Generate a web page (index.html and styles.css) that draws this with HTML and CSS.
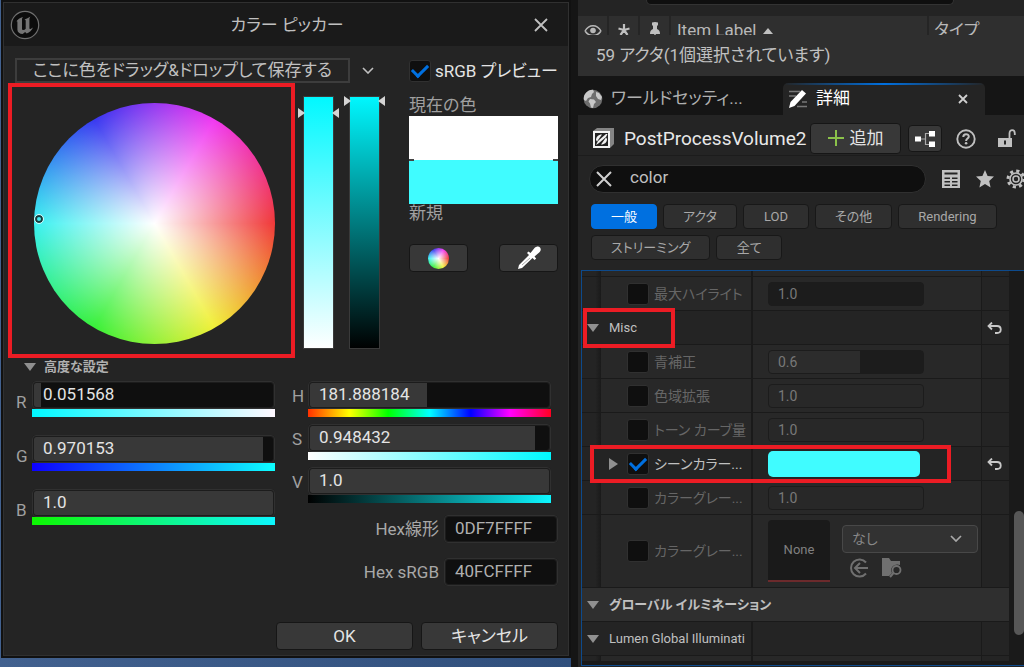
FILE: index.html
```html
<!DOCTYPE html>
<html lang="ja">
<head>
<meta charset="utf-8">
<title>カラー ピッカー</title>
<link rel="stylesheet" href="styles.css">
</head>
<body>
<main class="desktop">
  <section class="backdrop">
    <form class="dialog" aria-label="カラー ピッカー">
      <header class="titlebar">
        <svg class="logo" viewBox="0 0 30 30" width="30" height="30" aria-hidden="true">
          <circle cx="15" cy="15" r="13.7" fill="#0c0c0c" stroke="#6f6f6f" stroke-width="1.2"/>
          <path d="M6 12c1.600-2.500 4-4.400 7-5-.8.900-1 1.600-1 2.700v8.800c0 1 .5 1.600 1.300 1.600.9 0 1.700-.5 2.400-1.300v-8c0-.8-.4-1.200-1.200-1.300 2-.7 4-1.700 6-3-.8 1-1.100 1.800-1.100 3v8.500c0 .9.600 1 1.200.9.700-.1 1.500-.6 2.400-1.300-1.300 3-3.500 5-6.300 6l-1.600-1.500-2.400 1.900c-3-.2-5.300-1.700-5.300-4.300v-7c0-1.600-.6-1.900-1.400-.7z" fill="#747474"/>
        </svg>
        <h1 class="title">カラー ピッカー</h1>
        <button class="close" type="button" aria-label="閉じる">
          <svg viewBox="0 0 14 14" width="14" height="14"><path d="M1 1l12 12M13 1L1 13" stroke="#c0c0c0" stroke-width="1.800"/></svg>
        </button>
      </header>

      <div class="content">
        <div class="toprow">
          <div class="dropzone">ここに色をドラッグ&amp;ドロップして保存する</div>
          <button class="plain" type="button" aria-label="保存した色">
            <svg viewBox="0 0 12 7" width="12" height="7"><path d="M1 1l5 5 5-5" fill="none" stroke="#c0c0c0" stroke-width="1.600"/></svg>
          </button>
          <label class="srgb"><input class="check" type="checkbox" checked>sRGB プレビュー</label>
        </div>

        <div class="picker">
          <div class="wheelframe"><div class="wheel"><span class="cursor"></span></div></div>
          <div class="bar bar-sat"><i class="mark mark-l"></i><i class="mark mark-r"></i></div>
          <div class="bar bar-val"><i class="mark mark-l"></i><i class="mark mark-r"></i></div>
          <div class="preview">
            <span class="caption">現在の色</span>
            <div class="swatch"></div>
            <span class="caption">新規</span>
            <div class="modes">
              <button class="btn mode" type="button" aria-label="カラーホイール"><span class="miniwheel"></span></button>
              <button class="btn mode" type="button" aria-label="スポイト">
                <svg viewBox="0 0 26 26" width="26" height="26"><path d="M2 24l1-4L13 10l-2-2 1.500-1.500 2 1.500 4-5c2-2 4.500-2 5.500-.5 1.200 1.500 1 3.500-.8 5l-4.700 4 1.700 2-1.700 1.600-2-2L6 23z" fill="#fff"/><path d="M6 20l8-7" stroke="#aaa" stroke-width="1"/></svg>
              </button>
            </div>
          </div>
        </div>

        <button class="advanced" type="button"><i class="tri"></i>高度な設定</button>

        <div class="channels">
          <div class="group rgb">
            <div class="channel"><label for="r">R</label><div class="field"><input id="r" class="num" value="0.051568" style="--fill:3%"><div class="ramp ramp-r"></div></div></div>
            <div class="channel"><label for="g">G</label><div class="field"><input id="g" class="num" value="0.970153" style="--fill:96%"><div class="ramp ramp-g"></div></div></div>
            <div class="channel"><label for="b">B</label><div class="field"><input id="b" class="num" value="1.0" style="--fill:100%"><div class="ramp ramp-b"></div></div></div>
          </div>
          <div class="right">
            <div class="group hsv">
              <div class="channel"><label for="h">H</label><div class="field"><input id="h" class="num" value="181.888184" style="--fill:49%"><div class="ramp ramp-h"></div></div></div>
              <div class="channel"><label for="s">S</label><div class="field"><input id="s" class="num" value="0.948432" style="--fill:94%"><div class="ramp ramp-s"></div></div></div>
              <div class="channel"><label for="v">V</label><div class="field"><input id="v" class="num" value="1.0" style="--fill:100%"><div class="ramp ramp-v"></div></div></div>
            </div>
            <div class="hexes">
              <div class="hexrow"><label for="hl">Hex線形</label><input id="hl" class="num hex" value="0DF7FFFF"></div>
              <div class="hexrow"><label for="hs">Hex sRGB</label><input id="hs" class="num hex" value="40FCFFFF"></div>
            </div>
          </div>
        </div>

        <footer class="actions">
          <button class="btn" type="button">OK</button>
          <button class="btn" type="button">キャンセル</button>
        </footer>
      </div>
    </form>
  </section>

  <section class="side">
    <div class="outliner">
      <div class="outsearch"><div class="pill-end"></div></div>
      <div class="cols">
        <span class="col ico"><svg viewBox="0 0 18 12" width="18" height="12"><path d="M1 7c4-7 12-7 16 0M1 7c4 6 12 6 16 0" fill="none" stroke="#b8b8b8" stroke-width="1.500"/><circle cx="9" cy="6.500" r="2.800" fill="#b8b8b8"/></svg></span>
        <span class="col ico"><svg viewBox="0 0 12 12" width="12" height="12"><path d="M6 0v6M0.500 4.500L6 6M11.500 4.500L6 6M2.500 11L6 6l3.500 5" stroke="#c0c0c0" stroke-width="2.200" fill="none"/></svg></span>
        <span class="col ico"><svg viewBox="0 0 12 16" width="12" height="16"><path d="M3 0.500q3-1 6 0v2.500l-1 1v3c2 1 3 2 3 5H1c0-3 1-4 3-5v-3l-1-1z" fill="#c0c0c0"/><path d="M6 12v4" stroke="#c0c0c0" stroke-width="1.400"/></svg></span>
        <span class="col item">Item Label <i class="sort"></i></span>
        <span class="col type">タイプ</span>
      </div>
      <div class="status">59 アクタ(1個選択されています)</div>
    </div>

    <nav class="tabs">
      <a class="tab" href="#world">
        <svg viewBox="0 0 20 20" width="20" height="20" aria-hidden="true"><circle cx="10" cy="10" r="9.300" fill="#6e6e6e"/><path d="M2 5c2-3 5-4.500 8-4.300l1 2.300-2 2-1 3-3 1-2 3-2-1c-.6-2 0-4.500 1-6zM7 10l4 .5 2 2.500-2 2-1 4-2-.5-1-4-1.500-2zM13 3l3 1 3 4-1 3-3-1-2-3z" fill="#c8c8c8"/></svg>
        <span>ワールドセッティ...</span>
      </a>
      <a class="tab active" href="#details">
        <svg viewBox="0 0 20 20" width="20" height="20" aria-hidden="true"><path d="M1 2.500h11M1 7h7M14 13h5M9 17.500h10" stroke="#777" stroke-width="1.500"/><path d="M1 19l1.500-6L14 1l4 3.500L6.500 17z" fill="#fff"/></svg>
        <span>詳細</span>
        <svg class="tabclose" viewBox="0 0 10 10" width="10" height="10" aria-hidden="true"><path d="M1 1l8 8M9 1L1 9" stroke="#d0d0d0" stroke-width="1.800"/></svg>
      </a>
    </nav>

    <div class="details">
      <div class="objrow">
        <svg viewBox="0 0 21 21" width="21" height="21" aria-hidden="true"><path d="M0 3l4-3h17v16l-4 4z" fill="#858585"/><rect x="0" y="3" width="17" height="17" fill="#f2f2f2"/><rect x="2" y="5" width="13" height="13" fill="#222"/><path d="M3 12c0-3 2-5.500 6-5.500l-5 7zM14 11c0 3-2 5.500-6 5.500l5-7z" fill="#f2f2f2"/><path d="M3 17l2-4 8-7h1.500l-1.500 3-7 6z" fill="#f2f2f2"/></svg>
        <h2 class="objname">PostProcessVolume2</h2>
        <button class="btn add" type="button"><svg viewBox="0 0 16 16" width="16" height="16"><path d="M8 0v16M0 8h16" stroke="#8bc24a" stroke-width="2"/></svg>追加</button>
        <button class="btn tree" type="button" aria-label="ブループリント"><svg viewBox="0 0 22 16" width="22" height="16"><path d="M7 8h5M16 2.500h-4.500v11H16" fill="none" stroke="#aaa" stroke-width="1.200"/><path d="M1 5.500h6v5H1zM15 0h6v5.500h-6zM15 10.500h6V16h-6z" fill="#fff"/></svg></button>
        <button class="plain" type="button" aria-label="ヘルプ"><svg viewBox="0 0 20 20" width="20" height="20"><circle cx="10" cy="10" r="8.700" fill="none" stroke="#c0c0c0" stroke-width="1.900"/><path d="M7.300 8c0-3.800 5.600-3.600 5.500-.4 0 2-2.700 2-2.700 4.400" fill="none" stroke="#c0c0c0" stroke-width="2"/><circle cx="10.100" cy="14.300" r="1.300" fill="#c0c0c0"/></svg></button>
        <button class="plain lock" type="button" aria-label="ロック"><svg viewBox="0 0 18 19" width="18" height="19"><path d="M11.500 9V4.500c0-4.500 5.300-4.500 5.300 0V6" fill="none" stroke="#c0c0c0" stroke-width="1.800"/><path d="M0 9h14v9H0z" fill="#c0c0c0"/><path d="M7 11.500v4" stroke="#242424" stroke-width="2"/></svg></button>
      </div>

      <div class="searchrow">
        <div class="search">
          <svg viewBox="0 0 16 16" width="16" height="16" aria-hidden="true"><path d="M1 1l14 14M15 1L1 15" stroke="#d0d0d0" stroke-width="2"/></svg>
          <input aria-label="詳細を検索" value="color">
        </div>
        <button class="plain" type="button" aria-label="プロパティ マトリックス"><svg viewBox="0 0 18 18" width="18" height="18"><path d="M0 0h18v18H0z" fill="#c0c0c0"/><path d="M2.500 2.500h13v2h-13zM2.500 7.500H8v1.500H2.500zM10 7.500h5.500v1.500H10zM2.500 11H8v1.500H2.500zM10 11h5.500v1.500H10zM2.500 14.500H8V16H2.500zM10 14.500h5.500V16H10z" fill="#242424"/></svg></button>
        <button class="plain" type="button" aria-label="お気に入り"><svg viewBox="0 0 18 18" width="18" height="18"><path d="M9 0l2.600 6 6.400.6-4.800 4.300 1.400 6.500L9 14l-5.600 3.400 1.400-6.500L0 6.600 6.400 6z" fill="#c0c0c0"/></svg></button>
        <button class="plain gear" type="button" aria-label="設定"><svg viewBox="0 0 20 20" width="20" height="20"><circle cx="10" cy="10" r="8" fill="none" stroke="#c0c0c0" stroke-width="3" stroke-dasharray="3.140 3.140"/><circle cx="10" cy="10" r="6" fill="none" stroke="#c0c0c0" stroke-width="1.600"/><circle cx="10" cy="10" r="3" fill="none" stroke="#c0c0c0" stroke-width="1.500"/></svg></button>
      </div>

      <div class="filters">
        <button class="chip on" type="button">一般</button>
        <button class="chip" type="button">アクタ</button>
        <button class="chip" type="button">LOD</button>
        <button class="chip" type="button">その他</button>
        <button class="chip" type="button">Rendering</button>
        <button class="chip" type="button">ストリーミング</button>
        <button class="chip" type="button">全て</button>
      </div>

      <div class="listwrap">
        <div class="list">
          <div class="row sliver"><div class="gut"></div><div class="name"></div><div class="val"></div><div class="reset"></div></div>
          <div class="row"><div class="gut"></div><div class="name"><input class="check" type="checkbox" id="p1"><label for="p1">最大ハイライト</label></div><div class="val"><input class="pval dark" aria-label="最大ハイライト" value="1.0"></div><div class="reset"></div></div>
          <div class="row head"><button class="name open" type="button"><i class="tri"></i>Misc</button><div class="val"></div><div class="reset"><svg viewBox="0 0 15 12" width="15" height="12"><path d="M5 0.500L1.500 4 5 7.500M1.500 4H10c5 0 5 7 0 7H8" fill="none" stroke="#c8c8c8" stroke-width="1.800"/></svg></div><span class="note note-misc"></span></div>
          <div class="row"><div class="gut"></div><div class="name"><input class="check" type="checkbox" id="p2"><label for="p2">青補正</label></div><div class="val"><input class="pval part" aria-label="青補正" value="0.6"></div><div class="reset"></div></div>
          <div class="row"><div class="gut"></div><div class="name"><input class="check" type="checkbox" id="p3"><label for="p3">色域拡張</label></div><div class="val"><input class="pval" aria-label="色域拡張" value="1.0"></div><div class="reset"></div></div>
          <div class="row"><div class="gut"></div><div class="name"><input class="check" type="checkbox" id="p4"><label for="p4">トーン カーブ量</label></div><div class="val"><input class="pval" aria-label="トーン カーブ量" value="1.0"></div><div class="reset"></div></div>
          <div class="row live"><div class="gut"></div><div class="name"><i class="tri side-tri"></i><input class="check" type="checkbox" id="p5" checked><label for="p5">シーンカラー...</label></div><div class="val"><button class="tint" type="button" aria-label="シーンカラー"></button></div><div class="reset"><svg viewBox="0 0 15 12" width="15" height="12"><path d="M5 0.500L1.500 4 5 7.500M1.500 4H10c5 0 5 7 0 7H8" fill="none" stroke="#c8c8c8" stroke-width="1.800"/></svg></div><span class="note note-scene"></span></div>
          <div class="row"><div class="gut"></div><div class="name"><input class="check" type="checkbox" id="p6"><label for="p6">カラーグレー...</label></div><div class="val"><input class="pval" aria-label="カラーグレーディング" value="1.0"></div><div class="reset"></div></div>
          <div class="row tall"><div class="gut"></div><div class="name"><input class="check" type="checkbox" id="p7"><label for="p7">カラーグレー...</label></div>
            <div class="val asset">
              <div class="thumb">None</div>
              <div class="assetside">
                <div class="combo"><select aria-label="アセット"><option>なし</option></select><svg viewBox="0 0 12 7" width="12" height="7"><path d="M1 1l5 5 5-5" fill="none" stroke="#a8a8a8" stroke-width="1.700"/></svg></div>
                <div class="assetbtns">
                  <button class="plain" type="button" aria-label="選択アセットを使用"><svg viewBox="0 0 20 20" width="20" height="20"><path d="M17 4.500A8.500 8.500 0 1 0 17 15.500M19 10H6M11 5l-5 5 5 5" fill="none" stroke="#707070" stroke-width="2"/></svg></button>
                  <button class="plain" type="button" aria-label="参照"><svg viewBox="0 0 22 20" width="22" height="20"><path d="M1 0h7l2 3h9v4c-5-2-11 2-8 8l-3 3H1z" fill="#707070"/><circle cx="15.500" cy="12" r="4" fill="none" stroke="#707070" stroke-width="1.800"/><path d="M12.500 15L9 19" stroke="#707070" stroke-width="2"/></svg></button>
                </div>
              </div>
            </div><div class="reset"></div></div>
          <button class="category" type="button"><i class="tri"></i>グローバル イルミネーション</button>
          <div class="row head"><button class="name open" type="button"><i class="tri"></i>Lumen Global Illuminati</button><div class="val"></div><div class="reset"></div></div>
          <div class="row sliver"><div class="gut"></div><div class="name"></div><div class="val"></div><div class="reset"></div></div>
        </div>
        <div class="scroll"><div class="thumbbar"></div></div>
      </div>
    </div>
  </section>
</main>
</body>
</html>
```

FILE: styles.css
```css
* { box-sizing: border-box; }
body {
  margin: 0;
  background: #151515;
  color: #c0c0c0;
  font-family: Roboto, "Noto Sans CJK JP", sans-serif;
  font-feature-settings: "palt";
  font-size: 17px;
  line-height: 22px;
}
button, input, select { font: inherit; font-feature-settings: inherit; color: inherit; margin: 0; }
button { padding: 0; border: 0; background: none; }
svg { display: block; flex: none; }
h1, h2 { margin: 0; font-weight: 400; }

.desktop {
  display: grid;
  grid-template-columns: minmax(0, 571fr) minmax(0, 453fr);
  min-height: 100vh;
}
.backdrop {
  padding: 0 0 9px 1px;
  background: linear-gradient(90deg, #42618f, #304f7c);
}
.dialog {
  height: 100%;
  display: flex;
  flex-direction: column;
  padding: 1px;
  background: #242424;
  border: 2px solid #111;
  outline: 1px solid #303030;
  outline-offset: -3px;
}
.titlebar {
  display: flex;
  align-items: center;
  justify-content: space-between;
  height: 43px;
  padding: 0 20px 0 6px;
  background: #1a1a1a;
}
.title { font-size: 17px; }
.content { flex: 1; display: flex; flex-direction: column; padding: 12px 10px 5px 4px; }
.toprow { display: flex; align-items: center; height: 25px; padding-left: 7px; }
.dropzone {
  flex: 1;
  border: 2px solid #3d3d3d;
  height: 25px;
  line-height: 20px;
  text-align: center;
}
.plain { display: flex; align-items: center; justify-content: center; }
.toprow .plain { width: 36px; }
.srgb { display: flex; align-items: center; gap: 4px; width: 149px; margin-left: 23px; color: #e4e4e4; white-space: nowrap; }
.check {
  appearance: none;
  flex: none;
  width: 22px;
  height: 22px;
  background: #0f0f0f;
  border: 1px solid #303030;
  border-radius: 3px;
  display: grid;
  place-items: center;
}
.check:checked::before {
  content: "";
  width: 13px;
  height: 7px;
  border: solid #0070e0;
  border-width: 0 0 3px 3px;
  transform: translateY(-2px) rotate(-45deg);
}
.picker { display: flex; align-items: flex-start; }
.wheelframe {
  flex: none;
  display: grid;
  place-items: center;
  width: 287px;
  height: 275px;
  padding: 5px 0 0 6px;
  border: 4px solid #ec1c24;
}
.wheel, .miniwheel {
  border-radius: 50%;
  background:
    radial-gradient(closest-side, #fff, #fff0),
    conic-gradient(from 90deg, #f03838, #f0f038, #38f038, #38f0f0, #3838f0, #f038f0, #f03838);
}
.wheel { position: relative; width: 241px; height: 241px; }
.miniwheel { width: 21px; height: 21px; }
.cursor {
  position: absolute;
  left: 1px;
  top: 112px;
  width: 8px;
  height: 8px;
  border: 2px solid #163c3c;
  border-radius: 50%;
  outline: 1px solid #d8f8f8;
}
.bar { position: relative; flex: none; width: 31px; height: 253px; margin-top: 13px; outline: 1px solid #3a3a3a; outline-offset: -1px; }
.bar-sat { margin-left: 8px; background: linear-gradient(#00f8ff, #fff); }
.bar-val { margin-left: 15px; background: linear-gradient(#00f8ff, #000); }
.mark { position: absolute; top: 0; border: solid transparent; border-width: 5px 0; }
.bar-sat .mark { top: 12px; }
.mark-l { left: -5px; border-left: 7px solid #d4d4d4; }
.mark-r { right: -5px; border-right: 7px solid #d4d4d4; }
.preview { flex: 1; display: flex; flex-direction: column; margin-left: 29px; padding-top: 11px; }
.caption { color: #a0a0a0; line-height: 22px; }
.swatch {
  height: 88px;
  background:
    linear-gradient(#444, #444) 0 43px / 5px 2px no-repeat,
    linear-gradient(#444, #444) 100% 43px / 5px 2px no-repeat,
    linear-gradient(#fff 50%, #40fcff 50%);
}
.swatch + .caption { line-height: 18px; }
.modes { display: flex; justify-content: space-between; margin-top: 22px; }
.btn {
  display: flex;
  align-items: center;
  justify-content: center;
  background: #383838;
  border: 1px solid #161616;
  border-radius: 4px;
  color: #e4e4e4;
}
.mode { width: 59px; height: 28px; }
.advanced { display: flex; align-items: center; gap: 8px; align-self: flex-start; margin-left: 16px; height: 17px; font-size: 13px; font-weight: 700; color: #b0b0b0; }
.tri { flex: none; border: solid transparent; border-width: 8px 6px 0; border-top-color: #909090; }
.channels { display: flex; gap: 17px; margin-top: 6px; padding-left: 8px; }
.group { display: flex; flex-direction: column; }
.rgb { flex: 1 1 0; gap: 18px; }
.right { flex: 1 1 7px; }
.hsv { gap: 7px; padding-right: 7px; }
.channel { display: flex; align-items: center; gap: 4px; }
.channel label { width: 12px; color: #a0a0a0; padding-top: 6px; }
.hsv .channel { align-items: flex-start; }
.hsv label { padding: 0; line-height: 30px; }
.field { flex: 1; min-width: 0; }
.num {
  display: block;
  width: 100%;
  height: 28px;
  padding: 0 9px 3px;
  border: 2px solid #1c1c1c;
  border-radius: 4px;
  outline: 1px solid #303030;
  outline-offset: -1px;
  background: linear-gradient(90deg, #383838 var(--fill, 0%), #0f0f0f var(--fill, 0%)) padding-box;
  color: #e4e4e4;
}
.ramp { height: 8px; }
.ramp-r { background: linear-gradient(90deg, #00f8ff, #fff8ff); }
.ramp-g { background: linear-gradient(90deg, #0d00ff, #0dffff); }
.ramp-b { background: linear-gradient(90deg, #0df700, #0df7ff); }
.ramp-h { background: linear-gradient(90deg, #ff3000, #ff0 17%, #0f0 33%, #0ff 50%, #00f 67%, #f0f 83%, #ff0020); }
.ramp-s { background: linear-gradient(90deg, #fff, #00f8ff); }
.ramp-v { background: linear-gradient(90deg, #000, #0df7ff); }
.hexes { display: flex; flex-direction: column; align-items: flex-end; gap: 15px; margin-top: 12px; color: #a8a8a8; }
.hexrow { display: flex; align-items: center; gap: 5px; }
.num.hex { width: 114px; color: #b0b0b0; }
.actions { display: flex; justify-content: flex-end; gap: 8px; margin-top: auto; }
.actions .btn { width: 137px; height: 28px; }

.side { display: flex; flex-direction: column; min-width: 0; padding-left: 7px; overflow: hidden; }
.outliner { background: #2f2f2f; height: 76px; }
.outsearch { height: 16px; padding: 0 70px 0 68px; background: #242424; }
.pill-end { height: 5px; background: #0f0f0f; border: solid #333; border-width: 0 1px 1px; border-radius: 0 0 14px 14px; }
.cols { display: flex; height: 19px; overflow: hidden; color: #b8b8b8; }
.col { height: 30px; padding-top: 3px; line-height: 22px; border-right: 2px solid #252525; }
.col.ico { display: flex; justify-content: center; width: 31px; padding-top: 8px; }
.col.ico:nth-child(3) { padding-top: 6px; }
.col.item { flex: 1; padding-left: 6px; }
.col.type { width: 95px; padding-left: 5px; border: 0; }
.sort { display: inline-block; margin-left: 2px; border: solid transparent; border-width: 0 5px 6px; border-bottom-color: #c0c0c0; vertical-align: 2px; }
.status { padding: 9px 0 0 18px; }
.tabs { display: flex; height: 39px; padding-top: 7px; background: #151515; }
.tab { display: flex; align-items: center; gap: 8px; width: 205px; padding: 0 5px; text-decoration: none; color: #b0b0b0; white-space: nowrap; }
.tab span { padding-bottom: 2px; }
.tab.active {
  width: 202px;
  background: linear-gradient(90deg, #242424, #0070e0 50%, #242424) top / 100% 2px no-repeat #242424;
  border-radius: 5px 5px 0 0;
  color: #fff;
}
.tabclose { margin: 0 12px 0 auto; }
.details { flex: 1; display: flex; flex-direction: column; background: #242424; }
.objrow { display: flex; align-items: center; height: 41px; padding: 7px 8px 0 15px; border-bottom: 1px solid #1c1c1c; gap: 8px; }
.objname { flex: 1; min-width: 0; margin-left: 2px; font-size: 19px; color: #e8e8e8; white-space: nowrap; }
.add { flex: none; width: 91px; height: 31px; gap: 6px; margin-right: -1px; padding-bottom: 2px; }
.tree { flex: none; width: 34px; height: 27px; }
.objrow .plain { flex: none; margin-left: 6px; }
.objrow .lock { margin-left: 14px; }
.searchrow { display: flex; align-items: center; gap: 16px; margin: 9px 0 0 11px; height: 28px; }
.search { flex: 1; display: flex; align-items: center; min-width: 0; height: 28px; padding: 0 12px 0 6px; border: 1px solid #303030; border-radius: 14px; background: #0f0f0f; }
.search input { flex: 1; min-width: 0; margin-left: 18px; padding: 0 0 4px; border: 0; background: none; }
.searchrow .gear { margin: 0 -2px 0 -4px; }
.filters { display: flex; flex-wrap: wrap; gap: 6px; padding: 11px 10px 0 13px; font-size: 13px; }
.chip { height: 25px; min-width: 66px; padding: 0 19px; background: #2f2f2f; border: 1px solid #181818; border-radius: 4px; color: #a8a8a8; }
.chip.on { background: #0070e0; border-color: #0070e0; color: #fff; }
.listwrap { flex: 1; display: flex; margin: 10px 0 1px 3px; border: solid #0d4a8c; border-width: 1px 0 1px 1px; background: #1a1a1a; }
.list { flex: 1; min-width: 0; font-size: 14px; line-height: 18px; }
.row {
  position: relative;
  display: grid;
  grid-template-columns: 19px 150px minmax(0, 1fr) 28px;
  min-height: 33px;
  margin-bottom: 1px;
}
.row > * { background: #282828; }
.row .gut { background: linear-gradient(90deg, #242424 70%, #1a1a1a); }
.row .name { display: flex; align-items: center; gap: 5px; padding-left: 26px; color: #666; white-space: nowrap; overflow: hidden; }
.row .val { display: flex; align-items: center; margin-left: 2px; padding-left: 15px; }
.row .reset { display: grid; place-items: center; margin-left: 1px; padding-right: 3px; background: #242424; }
.row.head > * { background: #242424; }
.row .name.open { grid-column: 1 / 3; padding-left: 5px; gap: 10px; font-size: 13px; color: #c0c0c0; }
.row.live > * { background: #242424; }
.row.live .name { padding-left: 8px; gap: 9px; color: #c0c0c0; }
.row.live label { margin-left: -4px; }
.side-tri { border-width: 6px 0 6px 9px; border-color: transparent transparent transparent #909090; }
.row.sliver { min-height: 5px; }
.row.tall { min-height: 72px; }
.pval {
  width: 156px;
  height: 24px;
  padding: 0 9px;
  background: #282828;
  border: 1px solid #1c1c1c;
  border-radius: 4px;
  color: #787878;
}
.pval.dark { background: #1c1c1c; }
.pval.part { background: linear-gradient(90deg, #2c2c2c 59%, #1c1c1c 59%); }
.tint { width: 152px; height: 26px; border-radius: 5px; background: #40fcff; }
.row .note { position: absolute; z-index: 1; border: 4px solid #ec1c24; background: none; pointer-events: none; }
.note-misc { left: 1px; top: -3px; width: 92px; height: 40px; }
.note-scene { left: 8px; top: -2px; width: 361px; height: 38px; }
.asset { gap: 12px; }
.thumb { width: 62px; height: 62px; background: #1a1a1a; border-bottom: 2px solid #6c2a2c; border-radius: 4px 4px 0 0; display: grid; place-items: center; color: #808080; font-size: 13px; flex: none; }
.assetside { width: 136px; }
.combo { display: flex; align-items: center; height: 28px; padding-right: 15px; background: #323232; border: 1px solid #484848; border-radius: 4px; color: #888; }
.combo select { flex: 1; appearance: none; border: 0; background: none; padding: 0 9px; }
.assetbtns { display: flex; gap: 12px; padding: 5px 0 0 7px; }
.category { display: flex; align-items: center; gap: 10px; width: 100%; height: 33px; margin-bottom: 1px; padding-left: 5px; background: #2f2f2f; font-size: 13px; font-weight: 700; color: #c0c0c0; }
.scroll { display: flex; align-items: flex-end; justify-content: flex-end; width: 15px; padding-bottom: 30px; }
.thumbbar { width: 10px; height: 124px; border-radius: 5px; background: #575757; }
```
